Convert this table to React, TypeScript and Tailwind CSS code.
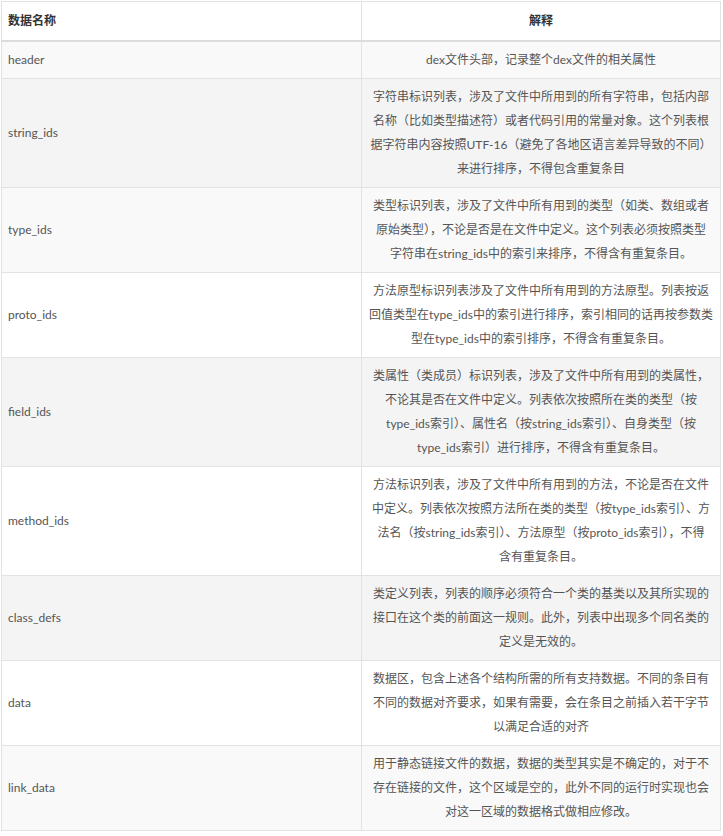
type Row = {
  name: string;
  lines: string[];
  bg: string;
};

const ROWS: Row[] = [
  {
    name: "header",
    lines: ["dex文件头部，记录整个dex文件的相关属性"],
    bg: "bg-[#f9f9f9]",
  },
  {
    name: "string_ids",
    lines: [
      "字符串标识列表，涉及了文件中所用到的所有字符串，包括内部",
      "名称（比如类型描述符）或者代码引用的常量对象。这个列表根",
      "据字符串内容按照UTF-16（避免了各地区语言差异导致的不同）",
      "来进行排序，不得包含重复条目",
    ],
    bg: "bg-[#f4f4f4]",
  },
  {
    name: "type_ids",
    lines: [
      "类型标识列表，涉及了文件中所有用到的类型（如类、数组或者",
      "原始类型），不论是否是在文件中定义。这个列表必须按照类型",
      "字符串在string_ids中的索引来排序，不得含有重复条目。",
    ],
    bg: "bg-[#f9f9f9]",
  },
  {
    name: "proto_ids",
    lines: [
      "方法原型标识列表涉及了文件中所有用到的方法原型。列表按返",
      "回值类型在type_ids中的索引进行排序，索引相同的话再按参数类",
      "型在type_ids中的索引排序，不得含有重复条目。",
    ],
    bg: "bg-white",
  },
  {
    name: "field_ids",
    lines: [
      "类属性（类成员）标识列表，涉及了文件中所有用到的类属性，",
      "不论其是否在文件中定义。列表依次按照所在类的类型（按",
      "type_ids索引）、属性名（按string_ids索引）、自身类型（按",
      "type_ids索引）进行排序，不得含有重复条目。",
    ],
    bg: "bg-[#f4f4f4]",
  },
  {
    name: "method_ids",
    lines: [
      "方法标识列表，涉及了文件中所有用到的方法，不论是否在文件",
      "中定义。列表依次按照方法所在类的类型（按type_ids索引）、方",
      "法名（按string_ids索引）、方法原型（按proto_ids索引），不得",
      "含有重复条目。",
    ],
    bg: "bg-white",
  },
  {
    name: "class_defs",
    lines: [
      "类定义列表，列表的顺序必须符合一个类的基类以及其所实现的",
      "接口在这个类的前面这一规则。此外，列表中出现多个同名类的",
      "定义是无效的。",
    ],
    bg: "bg-[#f4f4f4]",
  },
  {
    name: "data",
    lines: [
      "数据区，包含上述各个结构所需的所有支持数据。不同的条目有",
      "不同的数据对齐要求，如果有需要，会在条目之前插入若干字节",
      "以满足合适的对齐",
    ],
    bg: "bg-white",
  },
  {
    name: "link_data",
    lines: [
      "用于静态链接文件的数据，数据的类型其实是不确定的，对于不",
      "存在链接的文件，这个区域是空的，此外不同的运行时实现也会",
      "对这一区域的数据格式做相应修改。",
    ],
    bg: "bg-[#f9f9f9]",
  },
];

function App() {
  return (
    <div className="min-h-screen bg-white pt-px pl-px font-['Lato','Noto_Sans_CJK_SC',sans-serif] text-[12px] leading-[24px] text-[#555]">
      <table className="w-[720px] table-fixed border-collapse">
        <colgroup>
          <col className="w-[360px]" />
          <col />
        </colgroup>
        <thead>
          <tr className="bg-white">
            <th className="h-[39px] border border-[#e2e2e2] border-b-2 border-b-[#dcdcdc] px-1.5 text-left font-bold text-[#333]">
              数据名称
            </th>
            <th className="h-[39px] border border-[#e2e2e2] border-b-2 border-b-[#dcdcdc] px-2 text-center font-bold text-[#333]">
              解释
            </th>
          </tr>
        </thead>
        <tbody>
          {ROWS.map((row) => (
            <tr key={row.name} className={row.bg}>
              <td className="border border-[#e2e2e2] px-1.5 py-[6px] text-left align-middle">
                {row.name}
              </td>
              <td className="border border-[#e2e2e2] px-1 py-[6px] text-center align-middle">
                {row.lines.map((line, i) => (
                  <div key={i} className="whitespace-nowrap">
                    {line}
                  </div>
                ))}
              </td>
            </tr>
          ))}
        </tbody>
      </table>
    </div>
  );
}

export default App;
